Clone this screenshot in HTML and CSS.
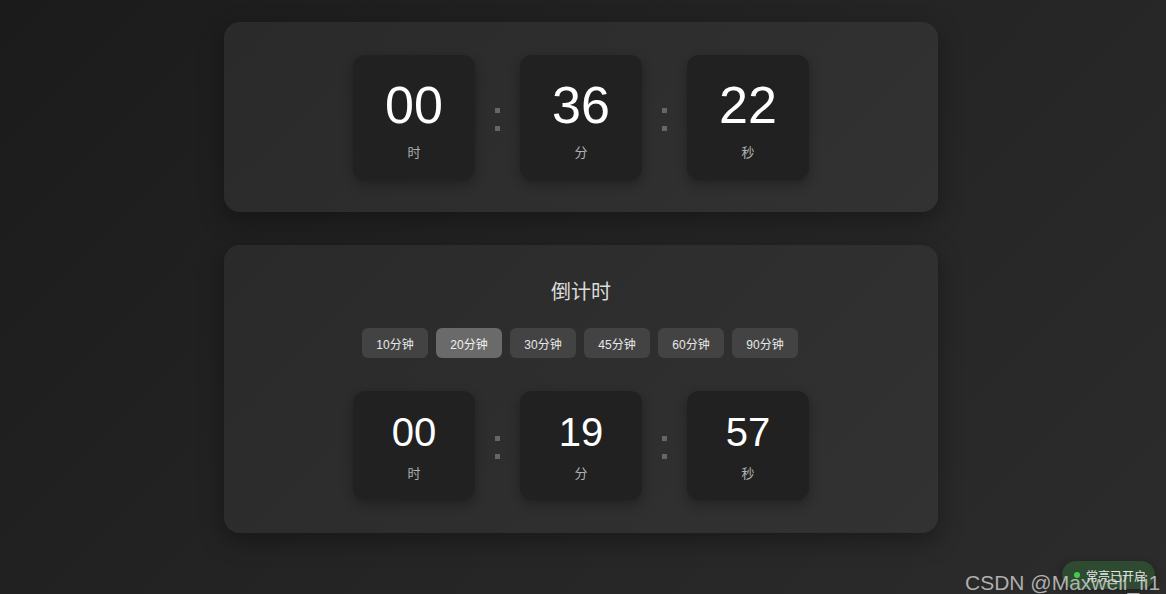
FILE: index.html
```html
<!DOCTYPE html>
<html lang="zh">
<head>
<meta charset="utf-8">
<title>时钟</title>
<link rel="stylesheet" href="styles.css">
</head>
<body>
<main class="wrap">
  <section class="card clock-card">
    <div class="time-row">
      <div class="unit big"><div class="num">00</div><div class="lab">时</div></div>
      <div class="colon"><i></i><i></i></div>
      <div class="unit big"><div class="num">36</div><div class="lab">分</div></div>
      <div class="colon"><i></i><i></i></div>
      <div class="unit big"><div class="num">22</div><div class="lab">秒</div></div>
    </div>
  </section>
  <section class="card timer-card">
    <h2 class="title">倒计时</h2>
    <div class="presets">
      <button class="preset">10分钟</button>
      <button class="preset active">20分钟</button>
      <button class="preset">30分钟</button>
      <button class="preset">45分钟</button>
      <button class="preset">60分钟</button>
      <button class="preset">90分钟</button>
    </div>
    <div class="time-row">
      <div class="unit small"><div class="num">00</div><div class="lab">时</div></div>
      <div class="colon"><i></i><i></i></div>
      <div class="unit small"><div class="num">19</div><div class="lab">分</div></div>
      <div class="colon"><i></i><i></i></div>
      <div class="unit small"><div class="num">57</div><div class="lab">秒</div></div>
    </div>
  </section>
</main>
<div class="wake"><span class="dot"></span>常亮已开启</div>
<div class="watermark">CSDN @Maxwell_li1</div>
</body>
</html>
```
FILE: styles.css
```css
html, body {
  margin: 0;
  height: 100%;
}
body {
  background: linear-gradient(135deg, #1b1b1b 0%, #242424 50%, #2c2c2c 100%);
  font-family: "Liberation Sans", "Noto Sans CJK SC", sans-serif;
  color: #fff;
  overflow: hidden;
  position: relative;
}
.wrap {
  width: 714px;
  margin: 0 auto;
  padding-top: 22px;
  display: flex;
  flex-direction: column;
  gap: 33px;
  transform: translateX(-2px);
}
.card {
  background: linear-gradient(135deg, #2a2a2a 0%, #2e2e2e 50%, #323232 100%);
  border-radius: 16px;
  box-shadow: 0 8px 24px rgba(0, 0, 0, 0.35);
}
.clock-card {
  padding: 33px 0 32px;
}
.timer-card {
  padding: 32px 0 33px;
  display: flex;
  flex-direction: column;
  align-items: center;
}
.time-row {
  display: flex;
  justify-content: center;
  align-items: center;
}
.unit {
  width: 122px;
  background: #212121;
  border-radius: 12px;
  box-shadow: 0 4px 12px rgba(0, 0, 0, 0.3);
  display: flex;
  flex-direction: column;
  align-items: center;
  box-sizing: border-box;
}
.unit.big {
  height: 125px;
  padding-top: 20px;
}
.unit.big .num {
  font-size: 52px;
  line-height: 60px;
}
.unit.small {
  height: 109px;
  padding-top: 17px;
}
.unit.small .num {
  font-size: 40px;
  line-height: 48px;
}
.num {
  color: #fff;
}
.lab {
  margin-top: 8px;
  font-size: 13px;
  line-height: 18px;
  color: #b0b0b0;
  font-family: "Noto Sans CJK SC", sans-serif;
}
.colon {
  width: 45px;
  display: flex;
  flex-direction: column;
  align-items: center;
  gap: 13px;
  padding-top: 4px;
}
.colon i {
  display: block;
  width: 5px;
  height: 5px;
  background: #666;
}
.title {
  margin: 0;
  font-size: 20px;
  line-height: 28px;
  font-weight: 400;
  color: #dcdcdc;
  font-family: "Noto Sans CJK SC", sans-serif;
}
.presets {
  margin-top: 23px;
  margin-bottom: 33px;
  display: flex;
  gap: 8px;
  transform: translateX(-1px);
}
.preset {
  width: 66px;
  height: 30px;
  border: none;
  border-radius: 6px;
  background: #434343;
  color: #e8e8e8;
  font-family: "Liberation Sans", "Noto Sans CJK SC", sans-serif;
  font-size: 12px;
  padding: 0;
}
.preset.active {
  background: #6a6a6a;
  color: #f0f0f0;
}
.wake {
  position: absolute;
  left: 1062px;
  top: 561px;
  width: 93px;
  height: 28px;
  box-sizing: border-box;
  padding-left: 12px;
  border-radius: 14px;
  background: #2e4a30;
  color: #e6e6e6;
  font-family: "Noto Sans CJK SC", sans-serif;
  font-size: 12px;
  display: flex;
  align-items: center;
  gap: 6px;
  box-shadow: 0 2px 8px rgba(0, 0, 0, 0.3);
}
.dot {
  width: 6px;
  height: 6px;
  border-radius: 50%;
  background: #3ecf4a;
}
.watermark {
  position: absolute;
  left: 965px;
  top: 570px;
  font-family: "Liberation Sans", sans-serif;
  font-size: 21px;
  line-height: 26px;
  color: rgba(220, 220, 220, 0.75);
  white-space: nowrap;
}
```
